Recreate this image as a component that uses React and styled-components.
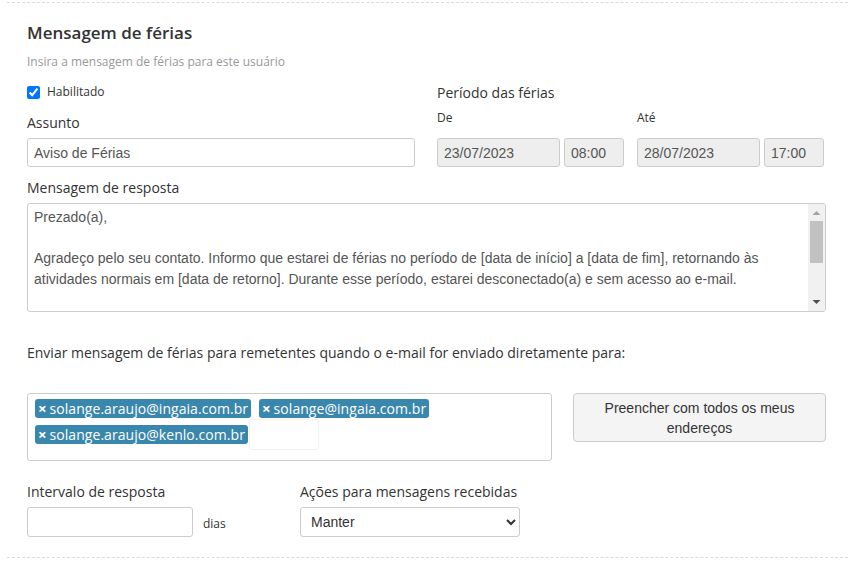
import React from 'react';
import styled, { createGlobalStyle } from 'styled-components';

const Global = createGlobalStyle`
  html, body { margin: 0; padding: 0; background: #fff; }
  body { font-family: "Open Sans", sans-serif; color: #333; }
  * { box-sizing: border-box; }
`;

const Panel = styled.section`
  margin: 2px 2px 0 7px;
  border-top: 1px dashed #dcdcdc;
  border-bottom: 1px dashed #dcdcdc;
  padding: 18px 22px 20px 20px;
`;

const Title = styled.h2`
  margin: 0;
  font-size: 17px;
  line-height: 24px;
  font-weight: 600;
  color: #333;
`;

const Subtitle = styled.p`
  margin: 9px 0 0;
  font-size: 12px;
  line-height: 15px;
  color: #999;
`;

const TopGrid = styled.div`
  display: grid;
  grid-template-columns: 388px 1fr;
  column-gap: 22px;
  align-items: start;
`;

const Column = styled.div`
  display: flex;
  flex-direction: column;
  padding-top: ${p => p.$top}px;
`;

const CheckRow = styled.label`
  display: flex;
  align-items: center;
  gap: 7px;
  height: 15px;
  font-size: 12px;
  line-height: 15px;
  color: #333;
`;

const Checkbox = styled.input`
  width: 13px;
  height: 13px;
  margin: 2px 0 0;
`;

const FieldLabel = styled.div`
  margin-top: ${p => p.$mt || 0}px;
  font-size: 14px;
  line-height: 20px;
  color: #333;
`;

const SubLabel = styled.div`
  font-size: 12px;
  line-height: 15px;
  color: #333;
`;

const TextInput = styled.input`
  display: block;
  width: ${p => p.$w ? `${p.$w}px` : '100%'};
  height: ${p => p.$h || 29}px;
  margin: ${p => p.$mt || 0}px 0 0;
  border: 1px solid #ccc;
  border-radius: 3px;
  padding: 0 6px;
  font-family: "Liberation Sans", Arial, sans-serif;
  font-size: 14px;
  color: #555;
  background: ${p => (p.readOnly ? '#eee' : '#fff')};
  outline: none;
`;

const PeriodGrid = styled.div`
  display: grid;
  grid-template-columns: 187px 187px;
  column-gap: 13px;
  margin-top: 7px;
`;

const PeriodGroup = styled.div`
  display: flex;
  flex-direction: column;
`;

const InputsRow = styled.div`
  display: flex;
  gap: 4px;
  margin-top: 13px;
`;

const DateField = styled(TextInput)`
  flex: 1;
  min-width: 0;
`;

const TimeField = styled(TextInput)`
  width: 60px;
  flex: none;
`;

const TextAreaWrap = styled.div`
  position: relative;
  margin-top: 5px;
`;

const MessageArea = styled.textarea`
  display: block;
  width: 100%;
  height: 109px;
  border: 1px solid #ccc;
  border-radius: 3px;
  padding: 3px 24px 3px 6px;
  font-family: "Liberation Sans", Arial, sans-serif;
  font-size: 14px;
  line-height: 20.5px;
  color: #555;
  resize: none;
  overflow: hidden;
  outline: none;
`;

const ScrollTrack = styled.div`
  position: absolute;
  top: 1px;
  right: 1px;
  bottom: 1px;
  width: 17px;
  background: #f1f1f1;
  border-radius: 0 2px 2px 0;
`;

const ScrollArrow = styled.svg`
  position: absolute;
  left: 0;
  width: 17px;
  height: 17px;
  ${p => (p.$down ? 'bottom: 0;' : 'top: 0;')}
`;

const ScrollThumb = styled.div`
  position: absolute;
  left: 2px;
  right: 2px;
  top: 17px;
  height: 42px;
  background: #c1c1c1;
`;

const TagRow = styled.div`
  display: flex;
  align-items: flex-start;
  gap: 21px;
  margin-top: 30px;
`;

const TagBox = styled.div`
  width: 525px;
  min-height: 68px;
  border: 1px solid #ccc;
  border-radius: 3px;
  padding: 5px 7px;
  display: flex;
  flex-wrap: wrap;
  align-items: center;
  align-content: flex-start;
  row-gap: 1px;
`;

const Tag = styled.span`
  display: inline-flex;
  align-items: center;
  height: 19px;
  padding: 0 3px 0 3px;
  margin-right: ${p => p.$mr}px;
  background: #3a87ad;
  color: #fff;
  border-radius: 3px;
  font-size: 14px;
  line-height: 19px;
  letter-spacing: 0.05px;
`;

const TagX = styled.span`
  font-weight: 700;
  font-size: 15px;
  margin-right: 3px;
  letter-spacing: 0;
`;

const TagInput = styled.input`
  width: 70px;
  height: 31px;
  border: 1px solid #f3f3f3;
  border-radius: 3px;
  background: transparent;
  outline: none;
`;

const FillButton = styled.button`
  width: 253px;
  height: 49px;
  padding: 4px 12px;
  border: 1px solid #ccc;
  border-radius: 4px;
  background: #f4f4f4;
  font-family: "Liberation Sans", Arial, sans-serif;
  font-size: 14px;
  line-height: 20px;
  color: #333;
  text-align: center;
`;

const BottomRow = styled.div`
  display: flex;
  margin-top: 21px;
`;

const BottomGroup = styled.div`
  display: flex;
  flex-direction: column;
  width: ${p => p.$w}px;
`;

const InlineRow = styled.div`
  display: flex;
  align-items: flex-end;
  margin-top: 5px;
`;

const Unit = styled.span`
  margin: 0 0 6px 10px;
  font-size: 12px;
  line-height: 15px;
  color: #333;
`;

const Select = styled.select`
  width: 220px;
  height: 30px;
  margin-top: 5px;
  padding: 0 6px;
  border: 1px solid #ccc;
  border-radius: 3px;
  background: #fff;
  font-family: "Liberation Sans", Arial, sans-serif;
  font-size: 14px;
  color: #333;
  outline: none;
`;

const message = `Prezado(a),

Agradeço pelo seu contato. Informo que estarei de férias no período de [data de início] a [data de fim], retornando às atividades normais em [data de retorno]. Durante esse período, estarei desconectado(a) e sem acesso ao e-mail.

Em caso de urgência, por favor entre em contato com [nome do colega] através do e-mail [e-mail do colega].

Atenciosamente,
[Seu nome]`;

const tags = [
  'solange.araujo@ingaia.com.br',
  'solange@ingaia.com.br',
  'solange.araujo@kenlo.com.br',
];

export default function App() {
  return (
    <>
      <Global />
      <Panel>
        <Title>Mensagem de férias</Title>
        <Subtitle>Insira a mensagem de férias para este usuário</Subtitle>
        <TopGrid>
          <Column $top={15}>
            <CheckRow>
              <Checkbox type="checkbox" defaultChecked />
              Habilitado
            </CheckRow>
            <FieldLabel $mt={14}>Assunto</FieldLabel>
            <TextInput $mt={5} defaultValue="Aviso de Férias" />
          </Column>
          <Column $top={14}>
            <FieldLabel>Período das férias</FieldLabel>
            <PeriodGrid>
              <PeriodGroup>
                <SubLabel>De</SubLabel>
                <InputsRow>
                  <DateField readOnly value="23/07/2023" />
                  <TimeField readOnly value="08:00" />
                </InputsRow>
              </PeriodGroup>
              <PeriodGroup>
                <SubLabel>Até</SubLabel>
                <InputsRow>
                  <DateField readOnly value="28/07/2023" />
                  <TimeField readOnly value="17:00" />
                </InputsRow>
              </PeriodGroup>
            </PeriodGrid>
          </Column>
        </TopGrid>

        <FieldLabel $mt={11}>Mensagem de resposta</FieldLabel>
        <TextAreaWrap>
          <MessageArea defaultValue={message} />
          <ScrollTrack>
            <ScrollArrow viewBox="0 0 17 17">
              <path d="M4.5 11 L8.5 7 L12.5 11 Z" fill="#a3a3a3" />
            </ScrollArrow>
            <ScrollThumb />
            <ScrollArrow $down viewBox="0 0 17 17">
              <path d="M4.5 6 L8.5 10 L12.5 6 Z" fill="#505050" />
            </ScrollArrow>
          </ScrollTrack>
        </TextAreaWrap>

        <FieldLabel $mt={31}>
          Enviar mensagem de férias para remetentes quando o e-mail for enviado diretamente para:
        </FieldLabel>
        <TagRow>
          <TagBox>
            {tags.map((t, i) => (
              <Tag key={t} $mr={i === 2 ? 1 : 8}>
                <TagX>×</TagX>
                {t}
              </Tag>
            ))}
            <TagInput />
          </TagBox>
          <FillButton>Preencher com todos os meus endereços</FillButton>
        </TagRow>

        <BottomRow>
          <BottomGroup $w={273}>
            <FieldLabel>Intervalo de resposta</FieldLabel>
            <InlineRow>
              <TextInput $w={166} $h={30} />
              <Unit>dias</Unit>
            </InlineRow>
          </BottomGroup>
          <BottomGroup $w={230}>
            <FieldLabel>Ações para mensagens recebidas</FieldLabel>
            <Select defaultValue="manter">
              <option value="manter">Manter</option>
              <option value="excluir">Excluir</option>
            </Select>
          </BottomGroup>
        </BottomRow>
      </Panel>
    </>
  );
}
